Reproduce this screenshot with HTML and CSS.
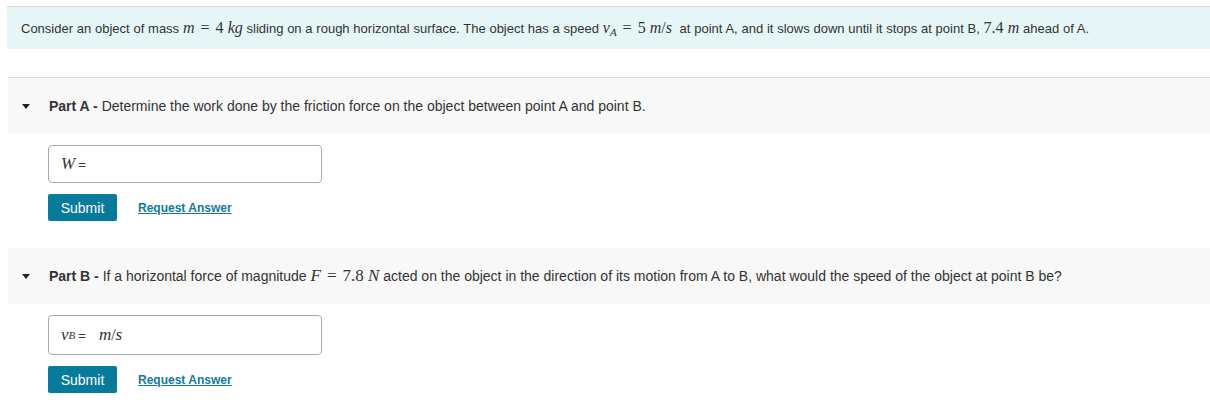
FILE: index.html
```html
<!DOCTYPE html>
<html>
<head>
<meta charset="utf-8">
<link rel="stylesheet" href="styles.css">
</head>
<body>
<div class="page">
  <div class="intro">
    Consider an object of mass <span class="m">m</span><span class="mr op">=</span><span class="mr">4 </span><span class="m">kg</span> sliding on a rough horizontal surface. The object has a speed <span class="m">v</span><sub class="ms">A</sub><span class="mr op">=</span><span class="mr">5 </span><span class="m">m</span><span class="mr">/</span><span class="m">s</span>&nbsp; at point A, and it slows down until it stops at point B, <span class="mr">7.4 </span><span class="m">m</span> ahead of A.
  </div>

  <div class="part first">
    <div class="part-head">
      <span class="tri"></span>
      <span class="ptitle"><b>Part A -</b> Determine the work done by the friction force on the object between point A and point B.</span>
    </div>
    <div class="part-body">
      <div class="answer"><span class="m big">W</span><span class="eq"> =</span></div>
      <div class="actions">
        <button class="submit">Submit</button>
        <a class="req" href="#">Request Answer</a>
      </div>
    </div>
  </div>

  <div class="part">
    <div class="part-head">
      <span class="tri"></span>
      <span class="ptitle"><b>Part B -</b> If a horizontal force of magnitude <span class="m big">F</span><span class="mr big op">=</span><span class="mr big">7.8 </span><span class="m big">N</span> acted on the object in the direction of its motion from A to B, what would the speed of the object at point B be?</span>
    </div>
    <div class="part-body">
      <div class="answer tall"><span class="m">v</span><sub class="ms">B</sub><span class="eq"> =</span><span class="unit"><span class="m">m</span><span class="mr">/</span><span class="m">s</span></span></div>
      <div class="actions">
        <button class="submit">Submit</button>
        <a class="req" href="#">Request Answer</a>
      </div>
    </div>
  </div>
</div>
</body>
</html>
```
FILE: styles.css
```css
html, body {
  margin: 0;
  padding: 0;
  background: #fff;
}
body {
  font-family: "Liberation Sans", Arial, sans-serif;
  font-size: 12px;
  color: #333;
}
.page {
  padding-top: 6px;
  padding-left: 7px;
}
.intro {
  border-top: 1px solid #dcdcdc;
  background: #e6f6f7;
  height: 43px;
  box-sizing: border-box;
  padding: 13px 0 0 14px;
  line-height: 15px;
  font-size: 13px;
  white-space: nowrap;
  word-spacing: 0.15px;
}
.m {
  font-family: "Liberation Serif", "Times New Roman", serif;
  font-style: italic;
  font-size: 16px;
}
.mr {
  font-family: "Liberation Serif", "Times New Roman", serif;
  font-size: 16px;
}
.op {
  margin: 0 6px;
}
.ms {
  font-family: "Liberation Serif", "Times New Roman", serif;
  font-style: italic;
  font-size: 11px;
  vertical-align: -3px;
  line-height: 0;
}
.big { font-size: 17px; }
.part.first {
  margin-top: 28px;
  border-top: 1px solid #dcdcdc;
}
.part {
  margin-left: 1px;
}
.part-head {
  background: #f8f8f8;
  height: 56px;
  display: flex;
  align-items: center;
  padding-left: 14px;
  box-sizing: border-box;
}
.tri {
  width: 0;
  height: 0;
  border-left: 4.5px solid transparent;
  border-right: 4.5px solid transparent;
  border-top: 5px solid #222;
  margin-right: 19px;
  margin-top: 1px;
}
.ptitle {
  font-size: 14px;
  color: #333;
  white-space: nowrap;
}
.ptitle b { color: #333; }
.part-body {
  padding: 11px 0 27px 40px;
}
.answer {
  width: 274px;
  height: 38px;
  box-sizing: border-box;
  border: 1px solid #aaa;
  border-radius: 4px;
  display: flex;
  align-items: center;
  padding-left: 12px;
  font-size: 13px;
}
.answer .m { font-size: 17px; }
.answer.tall { height: 40px; }
.answer .eq {
  font-size: 13px;
  margin-left: 3px;
}
.unit { margin-left: 13px; }
.actions {
  margin-top: 11px;
  display: flex;
  align-items: center;
}
.submit {
  background: #087b9c;
  color: #fff;
  border: none;
  border-radius: 2px;
  width: 69px;
  height: 27px;
  font-family: "Liberation Sans", Arial, sans-serif;
  font-size: 14px;
  padding: 0;
}
.req {
  margin-left: 21px;
  color: #1479a0;
  font-weight: bold;
  font-size: 12px;
  text-decoration: underline;
}
```
